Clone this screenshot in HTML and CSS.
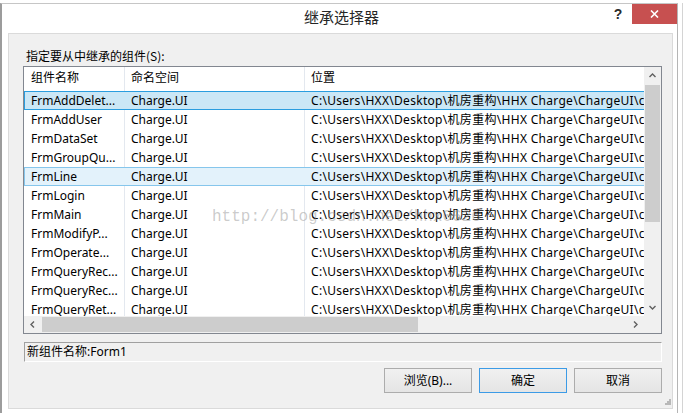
FILE: index.html
```html
<!DOCTYPE html>
<html lang="zh">
<head>
<meta charset="utf-8">
<title>继承选择器</title>
<link rel="stylesheet" href="styles.css">
</head>
<body>
<div class="screen">
  <div class="topstrip"></div>
  <div class="main">
    <div class="window">
      <div class="titlebar">
        <div class="title">继承选择器</div>
        <div class="help">?</div>
        <div class="close">
          <svg width="9" height="8" viewBox="0 0 9 8"><path d="M1 0.5 L8 7.5 M8 0.5 L1 7.5" stroke="#fff" stroke-width="1.6" fill="none"/></svg>
        </div>
      </div>
      <div class="client">
        <div class="label">指定要从中继承的组件(S):</div>
        <div class="list">
          <div class="viewport">
            <div class="row hdr"><div class="c1">组件名称</div><div class="c2">命名空间</div><div class="c3">位置</div></div>
            <div class="row sel"><div class="c1">FrmAddDelet...</div><div class="c2">Charge.UI</div><div class="c3">C:\Users\HXX\Desktop\机房重构\HHX Charge\ChargeUI\c</div></div>
            <div class="row"><div class="c1">FrmAddUser</div><div class="c2">Charge.UI</div><div class="c3">C:\Users\HXX\Desktop\机房重构\HHX Charge\ChargeUI\c</div></div>
            <div class="row"><div class="c1">FrmDataSet</div><div class="c2">Charge.UI</div><div class="c3">C:\Users\HXX\Desktop\机房重构\HHX Charge\ChargeUI\c</div></div>
            <div class="row"><div class="c1">FrmGroupQu...</div><div class="c2">Charge.UI</div><div class="c3">C:\Users\HXX\Desktop\机房重构\HHX Charge\ChargeUI\c</div></div>
            <div class="row hot"><div class="c1">FrmLine</div><div class="c2">Charge.UI</div><div class="c3">C:\Users\HXX\Desktop\机房重构\HHX Charge\ChargeUI\c</div></div>
            <div class="row"><div class="c1">FrmLogin</div><div class="c2">Charge.UI</div><div class="c3">C:\Users\HXX\Desktop\机房重构\HHX Charge\ChargeUI\c</div></div>
            <div class="row"><div class="c1">FrmMain</div><div class="c2">Charge.UI</div><div class="c3">C:\Users\HXX\Desktop\机房重构\HHX Charge\ChargeUI\c</div></div>
            <div class="row"><div class="c1">FrmModifyP...</div><div class="c2">Charge.UI</div><div class="c3">C:\Users\HXX\Desktop\机房重构\HHX Charge\ChargeUI\c</div></div>
            <div class="row"><div class="c1">FrmOperate...</div><div class="c2">Charge.UI</div><div class="c3">C:\Users\HXX\Desktop\机房重构\HHX Charge\ChargeUI\c</div></div>
            <div class="row"><div class="c1">FrmQueryRec...</div><div class="c2">Charge.UI</div><div class="c3">C:\Users\HXX\Desktop\机房重构\HHX Charge\ChargeUI\c</div></div>
            <div class="row"><div class="c1">FrmQueryRec...</div><div class="c2">Charge.UI</div><div class="c3">C:\Users\HXX\Desktop\机房重构\HHX Charge\ChargeUI\c</div></div>
            <div class="row"><div class="c1">FrmQueryRet...</div><div class="c2">Charge.UI</div><div class="c3">C:\Users\HXX\Desktop\机房重构\HHX Charge\ChargeUI\c</div></div>
            <div class="watermark">http://blog.csdn.net/hhx0626</div>
          </div>
          <div class="vscroll">
            <div class="arrow"><svg width="7" height="5" viewBox="0 0 7 5"><path d="M0.5 4 L3.5 1 L6.5 4" fill="none" stroke="#606060" stroke-width="1.4"/></svg></div>
            <div class="vthumb"></div>
            <div class="spacer"></div>
            <div class="arrow"><svg width="7" height="5" viewBox="0 0 7 5"><path d="M0.5 1 L3.5 4 L6.5 1" fill="none" stroke="#606060" stroke-width="1.4"/></svg></div>
          </div>
          <div class="hscroll">
            <div class="arrow"><svg width="5" height="7" viewBox="0 0 5 7"><path d="M4 0.5 L1 3.5 L4 6.5" fill="none" stroke="#606060" stroke-width="1.4"/></svg></div>
            <div class="hthumb"></div>
            <div class="spacer"></div>
            <div class="arrow"><svg width="5" height="7" viewBox="0 0 5 7"><path d="M1 0.5 L4 3.5 L1 6.5" fill="none" stroke="#606060" stroke-width="1.4"/></svg></div>
          </div>
          <div class="corner"></div>
        </div>
        <div class="field">新组件名称:Form1</div>
        <div class="buttons">
          <div class="btn">浏览(B)...</div>
          <div class="btn default">确定</div>
          <div class="btn">取消</div>
        </div>
        <div class="grip">
          <svg width="6" height="6" viewBox="0 0 6 6" fill="#b8b8b8"><rect x="4" y="0" width="2" height="2"/><rect x="2" y="2" width="2" height="2"/><rect x="4" y="2" width="2" height="2"/><rect x="0" y="4" width="2" height="2"/><rect x="2" y="4" width="2" height="2"/><rect x="4" y="4" width="2" height="2"/></svg>
        </div>
      </div>
    </div>
    <div class="outside"></div>
  </div>
</div>
</body>
</html>
```

FILE: styles.css
```css
html, body {
  margin: 0;
  padding: 0;
}
body {
  width: 685px;
  height: 413px;
  overflow: hidden;
  background: #ffffff;
  font-family: "Noto Sans", "Noto Sans CJK SC", sans-serif;
  font-size: 12px;
  color: #000;
}
.screen {
  display: flex;
  flex-direction: column;
  height: 413px;
}
.topstrip {
  height: 3px;
  background: #ffffff;
}
.main {
  display: flex;
  flex: 1;
}
.window {
  width: 678px;
  box-sizing: border-box;
  border-left: 2px solid #9c9c9c;
  border-top: 1px solid #c6c6c6;
  border-right: 1px solid #b5b5b5;
  background: #ffffff;
  display: flex;
  flex-direction: column;
}
.titlebar {
  display: flex;
  height: 29px;
  flex: none;
}
.title {
  flex: 1;
  text-align: center;
  padding-left: 74px;
  line-height: 26px;
  font-family: "Noto Sans CJK SC", sans-serif;
  font-size: 15px;
  color: #262626;
}
.help {
  width: 22px;
  margin-right: 3px;
  text-align: center;
  font-family: "Liberation Sans", sans-serif;
  font-weight: bold;
  font-size: 14px;
  line-height: 20px;
  color: #2b2b2b;
}
.close {
  width: 45px;
  height: 20px;
  background: #c75050;
  display: flex;
  align-items: center;
  justify-content: center;
}
.client {
  position: relative;
  margin: 0 4px 0 6px;
  height: 376px;
  box-sizing: border-box;
  border: 1px solid #dadada;
  background: #f0f0f0;
  padding: 14px 10px 0 14px;
  display: flex;
  flex-direction: column;
}
.label {
  line-height: 16px;
  padding-left: 3px;
  font-family: "Noto Sans CJK SC", sans-serif;
}
.list {
  margin-top: 2px;
  height: 268px;
  box-sizing: border-box;
  border: 1px solid #828790;
  background: #ffffff;
  display: grid;
  grid-template-columns: 1fr 17px;
  grid-template-rows: 1fr 17px;
}
.viewport {
  grid-area: 1 / 1;
  position: relative;
  overflow: hidden;
}
.row {
  display: flex;
  width: 800px;
  height: 19px;
  line-height: 19px;
  white-space: nowrap;
}
.row.hdr {
  height: 24px;
  line-height: 22px;
}
.c1, .c2, .c3 {
  box-sizing: border-box;
  overflow: hidden;
  white-space: nowrap;
}
.c1 {
  width: 101px;
  padding-left: 7px;
  border-right: 1px solid #e3e8ef;
}
.c2 {
  width: 180px;
  padding-left: 6px;
  border-right: 1px solid #e3e8ef;
}
.c3 {
  flex: 1;
  padding-left: 6px;
}
.row:not(.hdr) .c3 {
  letter-spacing: 0.3px;
}
.row.sel {
  background: #cbe7f6;
  box-shadow: inset 0 0 0 1px #2a9ddf;
}
.row.sel .c1, .row.sel .c2 {
  border-right-color: transparent;
}
.row.hot {
  background: #e3f2fb;
  box-shadow: inset 0 0 0 1px #86c6ec;
}
.row.hot .c1, .row.hot .c2 {
  border-right-color: transparent;
}
.watermark {
  position: absolute;
  left: 188px;
  top: 140px;
  font-family: "Liberation Mono", monospace;
  font-size: 16px;
  line-height: 20px;
  color: rgba(140, 140, 140, 0.45);
  white-space: nowrap;
  pointer-events: none;
}
.vscroll {
  grid-area: 1 / 2;
  background: #f0f0f0;
  display: flex;
  flex-direction: column;
}
.vscroll .arrow {
  height: 17px;
  display: flex;
  align-items: center;
  justify-content: center;
}
.vthumb {
  margin: 1px 0 0 1px;
  width: 15px;
  height: 137px;
  background: #cdcdcd;
}
.spacer {
  flex: 1;
}
.hscroll {
  grid-area: 2 / 1;
  background: #f0f0f0;
  display: flex;
}
.hscroll .arrow {
  width: 17px;
  display: flex;
  align-items: center;
  justify-content: center;
}
.hthumb {
  margin: 1px 0 1px 1px;
  width: 376px;
  background: #cdcdcd;
}
.corner {
  grid-area: 2 / 2;
  background: #f0f0f0;
}
svg {
  display: block;
}
.field {
  margin: 8px 0 0 1px;
  height: 20px;
  box-sizing: border-box;
  border: 1px solid;
  border-color: #a0a0a0 #ffffff #ffffff #a0a0a0;
  padding-left: 2px;
  line-height: 18px;
}
.buttons {
  margin-top: 6px;
  display: flex;
  justify-content: flex-end;
  gap: 7px;
}
.btn {
  width: 88px;
  height: 25px;
  box-sizing: border-box;
  border: 1px solid #acacac;
  background: linear-gradient(#f0f0f0, #e5e5e5);
  text-align: center;
  line-height: 23px;
}
.btn.default {
  border-color: #3c9be6;
}
.grip {
  position: absolute;
  right: 1px;
  bottom: 3px;
}
.outside {
  flex: 1;
  background: linear-gradient(to right, #ffffff 0, #ffffff 4px, #d4d4d4 4px, #d4d4d4 5px, #ffffff 5px);
}
```
